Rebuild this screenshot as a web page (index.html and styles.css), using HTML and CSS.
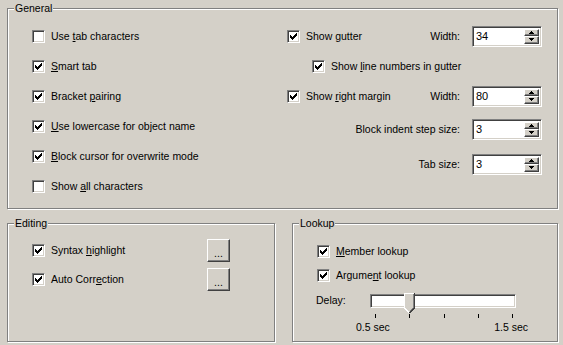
FILE: index.html
```html
<!DOCTYPE html>
<html lang="en">
<head>
  <meta charset="UTF-8" />
  <title>Editor options</title>
  <link rel="stylesheet" href="styles.css">
</head>
<body>
  <svg class="defs" width="0" height="0" aria-hidden="true">
    <defs>
      <path id="tick" d="M3 5h1v3h-1zM4 6h1v3h-1zM5 7h1v3h-1zM6 6h1v3h-1zM7 5h1v3h-1zM8 4h1v3h-1zM9 3h1v3h-1z" />
      <path id="up" d="M2 0h1v1h-1zM1 1h3v1h-3zM0 2h5v1h-5z" />
      <path id="down" d="M0 0h5v1h-5zM1 1h3v1h-3zM2 2h1v1h-1z" />
    </defs>
  </svg>

  <div class="dialog">
    <div class="group general">
      <div class="group-title">General</div>
      <div class="general-body">
        <div class="col-left">
          <label class="check"><span class="cb"></span><span>Use <u>t</u>ab characters</span></label>
          <label class="check"><span class="cb"><svg viewBox="1 1 11 11"><use href="#tick"/></svg></span><span><u>S</u>mart tab</span></label>
          <label class="check"><span class="cb"><svg viewBox="1 1 11 11"><use href="#tick"/></svg></span><span>Bracket <u>p</u>airing</span></label>
          <label class="check"><span class="cb"><svg viewBox="1 1 11 11"><use href="#tick"/></svg></span><span><u>U</u>se lowercase for object name</span></label>
          <label class="check"><span class="cb"><svg viewBox="1 1 11 11"><use href="#tick"/></svg></span><span><u>B</u>lock cursor for overwrite mode</span></label>
          <label class="check"><span class="cb"></span><span>Show <u>a</u>ll characters</span></label>
        </div>

        <div class="col-right">
          <label class="check"><span class="cb"><svg viewBox="1 1 11 11"><use href="#tick"/></svg></span><span>Show <u>g</u>utter</span></label>
          <span class="field-label">Width:</span>
          <div class="spin">
            <span class="spin-value">34</span>
            <span class="spin-btns">
              <span class="spin-btn"><svg width="5" height="3"><use href="#up"/></svg></span>
              <span class="spin-btn"><svg width="5" height="3"><use href="#down"/></svg></span>
            </span>
          </div>

          <label class="check sub"><span class="cb"><svg viewBox="1 1 11 11"><use href="#tick"/></svg></span><span>Show <u>l</u>ine numbers in gutter</span></label>

          <label class="check"><span class="cb"><svg viewBox="1 1 11 11"><use href="#tick"/></svg></span><span>Show <u>r</u>ight margin</span></label>
          <span class="field-label">Width:</span>
          <div class="spin">
            <span class="spin-value">80</span>
            <span class="spin-btns">
              <span class="spin-btn"><svg width="5" height="3"><use href="#up"/></svg></span>
              <span class="spin-btn"><svg width="5" height="3"><use href="#down"/></svg></span>
            </span>
          </div>

          <span class="field-label wide">Block indent step size:</span>
          <div class="spin">
            <span class="spin-value">3</span>
            <span class="spin-btns">
              <span class="spin-btn"><svg width="5" height="3"><use href="#up"/></svg></span>
              <span class="spin-btn"><svg width="5" height="3"><use href="#down"/></svg></span>
            </span>
          </div>

          <span class="field-label wide">Tab size:</span>
          <div class="spin">
            <span class="spin-value">3</span>
            <span class="spin-btns">
              <span class="spin-btn"><svg width="5" height="3"><use href="#up"/></svg></span>
              <span class="spin-btn"><svg width="5" height="3"><use href="#down"/></svg></span>
            </span>
          </div>
        </div>
      </div>
    </div>

    <div class="lower">
      <div class="group editing">
        <div class="group-title">Editing</div>
        <div class="editing-body">
          <label class="check"><span class="cb"><svg viewBox="1 1 11 11"><use href="#tick"/></svg></span><span>Syntax <u>h</u>ighlight</span></label>
          <button class="dots">...</button>
          <label class="check"><span class="cb"><svg viewBox="1 1 11 11"><use href="#tick"/></svg></span><span>Auto Corr<u>e</u>ction</span></label>
          <button class="dots">...</button>
        </div>
      </div>

      <div class="group lookup">
        <div class="group-title">Lookup</div>
        <div class="lookup-body">
          <label class="check"><span class="cb"><svg viewBox="1 1 11 11"><use href="#tick"/></svg></span><span><u>M</u>ember lookup</span></label>
          <label class="check"><span class="cb"><svg viewBox="1 1 11 11"><use href="#tick"/></svg></span><span>Argume<u>n</u>t lookup</span></label>
          <div class="delay">
            <span class="delay-label">Delay:</span>
            <div class="slider">
              <div class="track"></div>
              <svg class="thumb" width="11" height="20" viewBox="0 0 11 20" shape-rendering="crispEdges">
                <path d="M0 0H11V15L5.5 20L0 15Z" fill="#d4d0c8" />
                <path d="M0.5 15V0.5H10" stroke="#fff" fill="none" />
                <path d="M0.5 15L5.5 20" stroke="#fff" fill="none" />
                <path d="M10.5 0V15L5.5 20" stroke="#404040" fill="none" />
                <path d="M9.5 1V14.5L5.5 18.5" stroke="#808080" fill="none" />
              </svg>
              <div class="ticks"><i></i><i></i><i></i><i></i><i></i></div>
              <div class="scale"><span>0.5 sec</span><span>1.5 sec</span></div>
            </div>
          </div>
        </div>
      </div>
    </div>
  </div>
</body>
</html>
```

FILE: styles.css
```css
* {
  box-sizing: border-box;
}
body {
  margin: 0;
  background: #d4d0c8;
  font-family: "Liberation Sans", Arial, sans-serif;
  font-size: 10.5px;
  color: #000;
}
.defs {
  display: block;
  width: 0;
  height: 0;
}
.dialog {
  width: 563px;
  height: 345px;
  padding: 8px 0 0 7px;
}
u {
  text-decoration-thickness: 1px;
  text-underline-offset: 1px;
}

/* etched group box */
.group {
  border: 1px solid #808080;
  box-shadow: 1px 1px 0 #fff, inset 1px 1px 0 #fff;
}
.group-title {
  display: table;
  margin: -7px 0 0 6px;
  padding: 0 1px;
  line-height: 13px;
  background: #d4d0c8;
}
.general {
  width: 551px;
  height: 201px;
}
.general-body {
  display: flex;
  padding: 6px 14px 0 24px;
}
.col-left {
  width: 255px;
  display: grid;
  grid-auto-rows: 30px;
  align-items: center;
}
.col-right {
  width: 255px;
  display: grid;
  grid-template-columns: 1fr auto 70px;
  grid-template-rows: 30px 30px 30px 36px 34px;
  column-gap: 12px;
  align-items: center;
}
.field-label {
  justify-self: end;
  line-height: 13px;
}
.field-label.wide {
  grid-column: 1 / 3;
}
.check.sub {
  grid-column: 1 / -1;
  padding-left: 25px;
}

/* checkbox */
.check {
  display: flex;
  align-items: center;
  gap: 6px;
  line-height: 13px;
  white-space: nowrap;
}
.cb {
  flex: none;
  width: 13px;
  height: 13px;
  border: 1px solid;
  border-color: #808080 #fff #fff #808080;
  box-shadow: inset 1px 1px 0 #404040, inset -1px -1px 0 #d4d0c8;
  background: #fff;
}
.cb svg {
  display: block;
  width: 11px;
  height: 11px;
}

/* spin edit */
.spin {
  display: flex;
  height: 21px;
  padding: 2px 2px 2px 3px;
  border: 1px solid;
  border-color: #808080 #fff #fff #808080;
  box-shadow: inset 1px 1px 0 #404040, inset -1px -1px 0 #d4d0c8;
  background: #fff;
}
.spin-value {
  flex: 1;
  line-height: 15px;
  font-size: 11px;
}
.spin-btns {
  display: flex;
  flex-direction: column;
  width: 15px;
}
.spin-btn {
  flex: 1;
  display: flex;
  align-items: center;
  justify-content: center;
  background: #d4d0c8;
  border: 1px solid;
  border-color: #fff #404040 #404040 #fff;
  box-shadow: inset -1px -1px 0 #808080;
}
.spin-btn svg {
  display: block;
}

.lower {
  display: flex;
  gap: 17px;
  margin-top: 14px;
}
.editing {
  width: 268px;
  height: 119px;
}
.editing-body {
  display: grid;
  grid-template-columns: 175px 23px;
  grid-auto-rows: 29px;
  align-items: center;
  padding: 6px 0 0 24px;
}
.dots {
  width: 23px;
  height: 23px;
  padding: 5px 0 0;
  border: 1px solid;
  border-color: #fff #404040 #404040 #fff;
  box-shadow: inset -1px -1px 0 #808080;
  background: #d4d0c8;
  font: inherit;
  line-height: 13px;
  color: #000;
}

.lookup {
  width: 266px;
  height: 119px;
}
.lookup-body {
  padding: 9px 0 0 24px;
}
.lookup-body .check {
  height: 24px;
}
.delay {
  display: flex;
  margin: 7px 0 0 -1px;
}
.delay-label {
  width: 54px;
  line-height: 13px;
}
.slider {
  position: relative;
  width: 146px;
}
.track {
  height: 14px;
  border: 1px solid;
  border-color: #808080 #fff #fff #808080;
  box-shadow: inset 1px 1px 0 #404040, inset -1px -1px 0 #d4d0c8;
  background: #fff;
}
.thumb {
  position: absolute;
  left: 34px;
  top: -1px;
}
.ticks {
  display: flex;
  justify-content: space-between;
  height: 5px;
  margin-top: 6px;
  padding: 0 3px 0 5px;
}
.ticks i {
  width: 1px;
  height: 4px;
  background: #000;
}
.scale {
  display: flex;
  justify-content: space-between;
  margin: 2px -12px 0 -14px;
  line-height: 13px;
}
```
